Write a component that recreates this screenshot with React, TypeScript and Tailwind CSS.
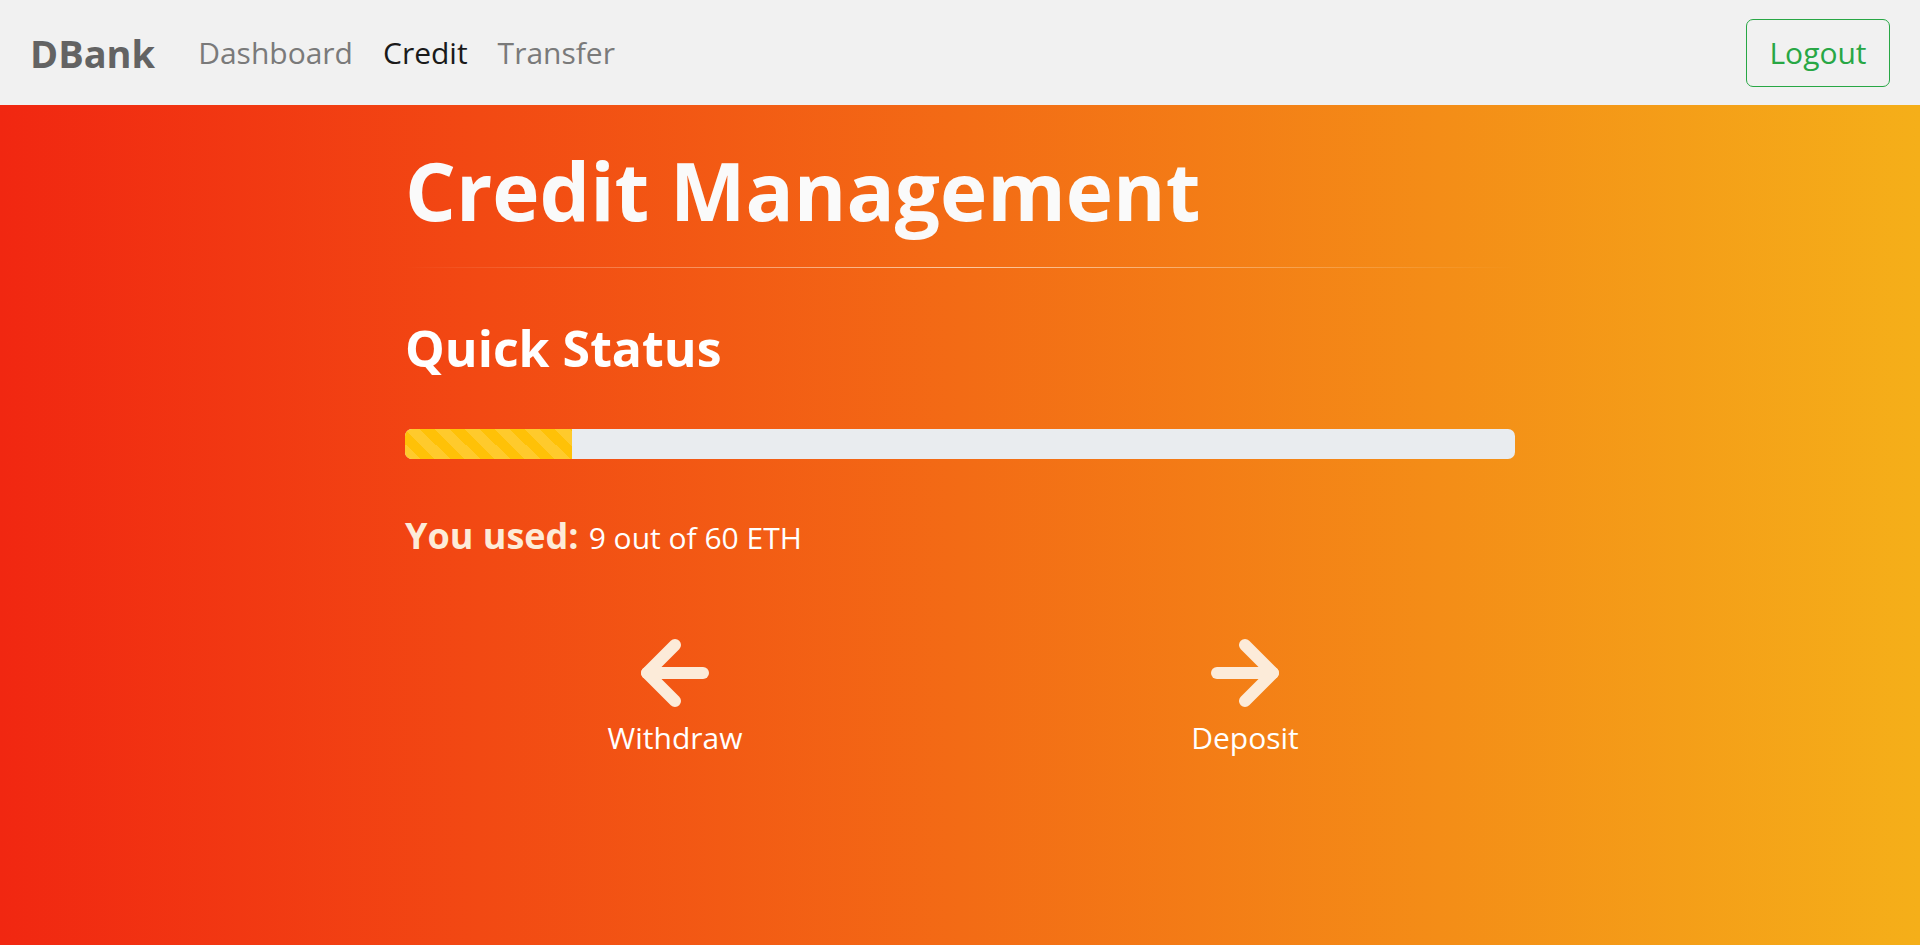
import { ArrowLeft, ArrowRight } from "lucide-react";

const used = 9;
const limit = 60;

export default function App() {
  const pct = (used / limit) * 100;

  return (
    <div
      className="min-h-screen flex flex-col bg-[linear-gradient(to_right,#f12711,#f5af19)]"
      style={{ fontFamily: '"Open Sans", "Liberation Sans", sans-serif' }}
    >
      {/* Navbar */}
      <nav className="h-[105px] shrink-0 bg-[#f1f1f1] flex items-center justify-between px-[30px]">
        <div className="flex items-center">
          <a className="text-[38px] font-bold text-[#636363] mr-[28px] leading-none">DBank</a>
          <a className="text-[30px] text-[#7a7a7a] px-[15px] leading-none">Dashboard</a>
          <a className="text-[30px] text-[#1a1a1a] px-[15px] leading-none">Credit</a>
          <a className="text-[30px] text-[#7a7a7a] px-[15px] leading-none">Transfer</a>
        </div>
        <button className="h-[68px] w-[144px] rounded-[7px] border border-[#28a745] text-[#28a745] text-[30px] flex items-center justify-center">
          Logout
        </button>
      </nav>

      {/* Content */}
      <main className="flex-1">
        <div className="w-[1140px] mx-auto px-[15px] pt-[37px] pb-10">
          <h1 className="text-[80px] font-bold leading-[1.2] text-[#fafafa]">Credit Management</h1>
          <div className="mt-[29px] h-px bg-[linear-gradient(to_right,transparent,rgba(255,235,210,0.75),transparent)]" />

          <h2 className="mt-[50px] text-[50px] font-bold leading-[1.2] text-white">Quick Status</h2>

          <div className="mt-[51px] h-[30px] w-full rounded-[7px] bg-[#e9ecef] overflow-hidden flex">
            <div
              className="h-full bg-[#ffc107] bg-[linear-gradient(45deg,rgba(255,255,255,.15)_25%,transparent_25%,transparent_50%,rgba(255,255,255,.15)_50%,rgba(255,255,255,.15)_75%,transparent_75%,transparent)] bg-[length:30px_30px]"
              style={{ width: `${pct}%` }}
            />
          </div>

          <p className="mt-[53px] leading-[48px] flex items-baseline gap-[10px]">
            <span className="text-[36px] font-bold text-[#fdebd8]">You used:</span>
            <span className="text-[30px] text-white">
              {used} out of {limit} ETH
            </span>
          </p>

          <div className="mt-[63px] -mx-[15px] grid grid-cols-2">
            <button className="flex flex-col items-center">
              <ArrowLeft size={96} strokeWidth={3} className="text-[#fcebd9]" />
              <span className="mt-0.5 text-[30px] leading-none text-white">Withdraw</span>
            </button>
            <button className="flex flex-col items-center">
              <ArrowRight size={96} strokeWidth={3} className="text-[#fcebd9]" />
              <span className="mt-0.5 text-[30px] leading-none text-white">Deposit</span>
            </button>
          </div>
        </div>
      </main>
    </div>
  );
}
